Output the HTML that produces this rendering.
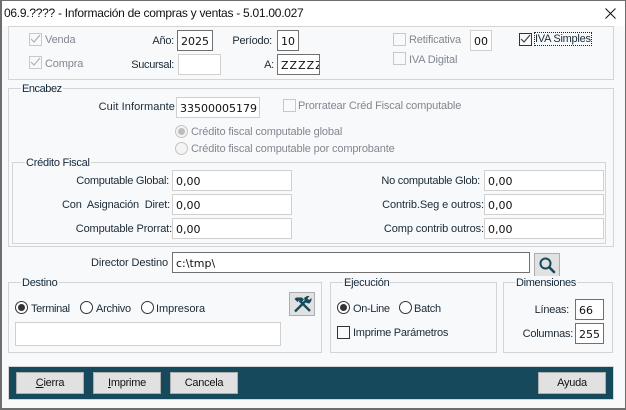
<!DOCTYPE html>
<html><head><meta charset="utf-8"><style>
html,body{margin:0;padding:0}
body{width:626px;height:410px;overflow:hidden;position:relative;background:#f8f9fb;font:11px/14px "Liberation Sans",sans-serif;letter-spacing:-.25px;color:#1a2a36}
div,span{position:absolute;box-sizing:border-box;white-space:nowrap}
.g{border:1px solid #d2d4d6}
.lg{background:#f8f9fb;padding:0 1px;height:14px;color:#14283a;margin-top:1px}
.i{background:#fff;border:1px solid #d0d0d0;font:11px/21px "DejaVu Sans",sans-serif;letter-spacing:0;padding-left:3px;color:#111;height:21px;overflow:hidden}
.d{border:1px solid #707070}
.l{text-align:right;height:14px;margin-top:1px}
.t{height:14px;margin-top:1px}
.o{color:#808890;letter-spacing:-.15px}
.c{width:13px;height:13px;border:1px solid #c8c8c8;background:#f8f9fb}
.c.k{border-color:#333}
.r{width:13px;height:13px;border-radius:50%;border:1px solid #333;background:#fff}
.r.x{border-color:#c4c4c4;background:#f4f4f4}
.r.on::after{content:"";position:absolute;left:2px;top:2px;width:7px;height:7px;border-radius:50%;background:#333}
.r.x.on::after{background:#bcbcbc}
.b{background:#e1e1e1;border:1px solid #adadad;width:68px;height:22px;text-align:center;line-height:21px;top:372px;color:#111}
svg{position:absolute;left:0;top:0}
</style></head><body>
<div style="left:0;top:0;width:626px;height:410px;border:1px solid #6e6e6e;border-width:1px 1px 2px 2px"></div>
<div style="left:2px;top:1px;width:623px;height:25px;background:#fff"></div>
<div style="left:4px;top:5px;height:16px;font-size:12px;letter-spacing:-.27px;line-height:16px;color:#111">06.9.???? - Información de compras y ventas - 5.01.00.027</div>
<svg width="626" height="30" style="left:0;top:0"><path d="M605.5 8.500L615.500 18.500M615.500 8.500L605.500 18.500" stroke="#111" stroke-width="1" fill="none"/></svg>

<div class="g" style="left:8px;top:26px;width:606px;height:54px"></div>
<div class="c" style="left:29px;top:33px"></div><div class="t o" style="left:45px;top:32px">Venda</div>
<div class="c" style="left:29px;top:56px"></div><div class="t o" style="left:45px;top:56px">Compra</div>
<svg width="50" height="80"><path d="M31 39l3 3 6-7M31 62l3 3 6-7" stroke="#b0b0b0" stroke-width="1.200" fill="none"/></svg>
<div class="l" style="right:452px;top:33px">Año:</div>
<div class="i d" style="left:177px;top:30px;width:36px">2025</div>
<div class="l" style="right:354px;top:33px">Período:</div>
<div class="i d" style="left:277px;top:30px;width:22px">10</div>
<div class="l" style="right:452px;top:57px;letter-spacing:-.35px">Sucursal:</div>
<div class="i" style="left:178px;top:54px;width:43px"></div>
<div class="l" style="right:352px;top:57px">A:</div>
<div class="i d" style="left:277px;top:54px;width:43px;letter-spacing:1px">ZZZZZ</div>
<div class="c" style="left:393px;top:33px"></div><div class="t o" style="left:409px;top:32px">Retificativa</div>
<div class="i" style="left:470px;top:30px;width:22px;padding-left:3px">00</div>
<div class="c" style="left:393px;top:52px"></div><div class="t o" style="left:409px;top:52px">IVA Digital</div>
<div class="c k" style="left:519px;top:33px"></div>
<svg width="626" height="60"><path d="M521 39l3 3 6-7" stroke="#444" stroke-width="1.200" fill="none"/></svg>
<div class="t" style="left:534px;top:31px;width:58px;height:14px;outline:1px dotted #222;outline-offset:-1px;padding-left:1px;line-height:14px">IVA Simples</div>

<div class="g" style="left:8px;top:88px;width:606px;height:159px"></div>
<div class="lg" style="left:21px;top:81px;letter-spacing:-.45px">Encabez</div>
<div class="l" style="right:451px;top:99px;letter-spacing:.08px">Cuit Informante</div>
<div class="i" style="left:176px;top:97px;width:84px;padding-left:3px">33500005179</div>
<div class="c" style="left:283px;top:99px"></div><div class="t o" style="left:298px;top:98px">Prorratear Créd Fiscal computable</div>
<div class="r x on" style="left:175px;top:125px"></div><div class="t o" style="left:191px;top:124px">Crédito fiscal computable global</div>
<div class="r x" style="left:175px;top:142px"></div><div class="t o" style="left:191px;top:141px">Crédito fiscal computable por comprobante</div>

<div class="g" style="left:12px;top:162px;width:594px;height:82px"></div>
<div class="lg" style="left:25px;top:155px">Crédito Fiscal</div>
<div class="l" style="right:457px;top:173px">Computable Global:</div>
<div class="i" style="left:172px;top:170px;width:120px">0,00</div>
<div class="l" style="right:456px;top:197px;letter-spacing:-.17px">Con&nbsp; Asignación&nbsp; Diret:</div>
<div class="i" style="left:172px;top:194px;width:120px">0,00</div>
<div class="l" style="right:454px;top:221px;letter-spacing:-.15px">Computable Prorrat:</div>
<div class="i" style="left:172px;top:218px;width:120px">0,00</div>
<div class="l" style="right:146px;top:173px">No computable Glob:</div>
<div class="i" style="left:484px;top:170px;width:120px">0,00</div>
<div class="l" style="right:142px;top:197px;letter-spacing:-.1px">Contrib.Seg e outros:</div>
<div class="i" style="left:484px;top:194px;width:120px">0,00</div>
<div class="l" style="right:142px;top:221px;letter-spacing:-.1px">Comp contrib outros:</div>
<div class="i" style="left:484px;top:218px;width:120px">0,00</div>

<div class="l" style="right:458px;top:255px;letter-spacing:-.12px">Director Destino</div>
<div class="i d" style="left:172px;top:252px;width:358px">c:\tmp\</div>
<div style="left:534px;top:253px;width:26px;height:24px;background:#e1e1e1;border:1px solid #adadad"></div>
<svg width="626" height="290"><circle cx="545.500" cy="263.500" r="5" fill="none" stroke="#17495c" stroke-width="2"/><path d="M549.500 267.500L554 272" stroke="#17495c" stroke-width="2.600" stroke-linecap="round"/></svg>

<div class="g" style="left:8px;top:282px;width:314px;height:71px"></div>
<div class="lg" style="left:21px;top:275px">Destino</div>
<div class="r on" style="left:15px;top:301px"></div><div class="t" style="left:31px;top:301px;letter-spacing:-.35px">Terminal</div>
<div class="r" style="left:80px;top:301px"></div><div class="t" style="left:96px;top:301px">Archivo</div>
<div class="r" style="left:141px;top:301px"></div><div class="t" style="left:156px;top:301px;letter-spacing:-.05px">Impresora</div>
<div style="left:289px;top:292px;width:26px;height:24px;background:#e1e1e1;border:1px solid #adadad"></div>
<svg width="626" height="320"><path d="M296 297.500h6l2 2-2.500 2.500-2-2-2 2-3-3z" fill="#17495c"/><path d="M299.500 300.500L310 311" stroke="#17495c" stroke-width="2.400" fill="none"/><path d="M295 311.500L306.500 300" stroke="#17495c" stroke-width="2.400" fill="none"/><path d="M305 301l-1-3 3-2 2.500 0-2 2.500 1.500 1.500 2.500-2 0 2.500-2 3-3-.5z" fill="#17495c"/></svg>
<div class="i" style="left:15px;top:322px;width:266px;height:24px"></div>

<div class="g" style="left:330px;top:282px;width:167px;height:71px"></div>
<div class="lg" style="left:343px;top:275px">Ejecución</div>
<div class="r on" style="left:337px;top:301px"></div><div class="t" style="left:353px;top:301px;letter-spacing:-.35px">On-Line</div>
<div class="r" style="left:399px;top:301px"></div><div class="t" style="left:414px;top:301px">Batch</div>
<div class="c k" style="left:337px;top:326px"></div><div class="t" style="left:353px;top:325px">Imprime Parámetros</div>

<div class="g" style="left:503px;top:282px;width:110px;height:71px"></div>
<div class="lg" style="left:515px;top:275px;letter-spacing:-.33px">Dimensiones</div>
<div class="l" style="right:57px;top:302px">Líneas:</div>
<div class="i d" style="left:575px;top:299px;width:29px">66</div>
<div class="l" style="right:53px;top:326px">Columnas:</div>
<div class="i d" style="left:575px;top:323px;width:29px">255</div>

<div style="left:8px;top:366px;width:606px;height:34px;background:#17495c;border:1px solid #d2d4d6"></div>
<div class="b" style="left:16px"><u>C</u>ierra</div>
<div class="b" style="left:93px"><u>I</u>mprime</div>
<div class="b" style="left:170px">Cancela</div>
<div class="b" style="left:538px">Ayuda</div>
</body></html>
